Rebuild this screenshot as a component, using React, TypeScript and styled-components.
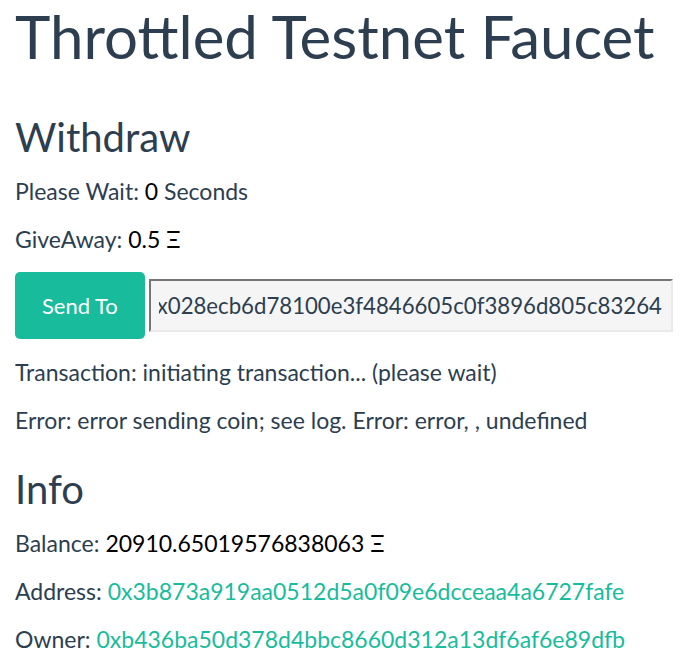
import { useEffect, useRef } from "react";
import { styled, createGlobalStyle } from "styled-components";

const GlobalStyle = createGlobalStyle`
  body {
    margin: 0;
    background: #ffffff;
    font-family: Lato, "Open Sans", "Liberation Sans", sans-serif;
    color: #2c3e50;
  }
`;

const Page = styled.main`
  padding: 3px 15px 0;
`;

const Title = styled.h1`
  font-size: 60px;
  font-weight: 400;
  line-height: 66px;
  margin: 0 0 46px;
  white-space: nowrap;
`;

const Heading = styled.h2`
  font-size: 40px;
  font-weight: 400;
  line-height: 44px;
  margin: 30px 0 16px;
`;

const Line = styled.p`
  font-size: 23px;
  line-height: 33px;
  margin: 0 0 15.3px;
  white-space: nowrap;
`;

const Value = styled.span`
  color: #000000;
`;

const Link = styled.a`
  color: #18bc9c;
  text-decoration: none;
`;

const SendRow = styled.form`
  display: flex;
  align-items: baseline;
  gap: 4px;
  margin: 0 0 17px;
`;

const SendButton = styled.button`
  flex: none;
  white-space: nowrap;
  font-family: inherit;
  font-size: 22px;
  line-height: 31px;
  padding: 18px 27px;
  border: none;
  border-radius: 5px;
  background: #18bc9c;
  color: #ffffff;
  cursor: pointer;
`;

const AddressInput = styled.input`
  flex: none;
  box-sizing: border-box;
  width: 524px;
  height: 53px;
  padding: 0 9px 0 8px;
  font-family: inherit;
  font-size: 22.2px;
  color: #2c3e50;
  background: #f5f5f5;
  border-style: solid;
  border-width: 2px;
  border-color: #767676 #e9e9e9 #e9e9e9 #767676;
  outline: none;
`;

export default function App() {
  const inputRef = useRef<HTMLInputElement>(null);

  useEffect(() => {
    const el = inputRef.current;
    if (el) el.scrollLeft = el.scrollWidth;
  }, []);

  return (
    <>
      <GlobalStyle />
      <Page>
        <Title>Throttled Testnet Faucet</Title>

        <Heading>Withdraw</Heading>
        <Line>
          Please Wait: <Value>0</Value> Seconds
        </Line>
        <Line>
          GiveAway: <Value>0.5 Ξ</Value>
        </Line>
        <SendRow onSubmit={(e) => e.preventDefault()}>
          <SendButton type="submit">Send To</SendButton>
          <AddressInput
            ref={inputRef}
            defaultValue="0x028ecb6d78100e3f4846605c0f3896d805c83264"
          />
        </SendRow>
        <Line>Transaction: initiating transaction... (please wait)</Line>
        <Line>Error: error sending coin; see log. Error: error, , undefined</Line>

        <Heading>Info</Heading>
        <Line>
          Balance: <Value>20910.65019576838063 Ξ</Value>
        </Line>
        <Line>
          Address: <Link href="#">0x3b873a919aa0512d5a0f09e6dcceaa4a6727fafe</Link>
        </Line>
        <Line>
          Owner: <Link href="#">0xb436ba50d378d4bbc8660d312a13df6af6e89dfb</Link>
        </Line>
      </Page>
    </>
  );
}
